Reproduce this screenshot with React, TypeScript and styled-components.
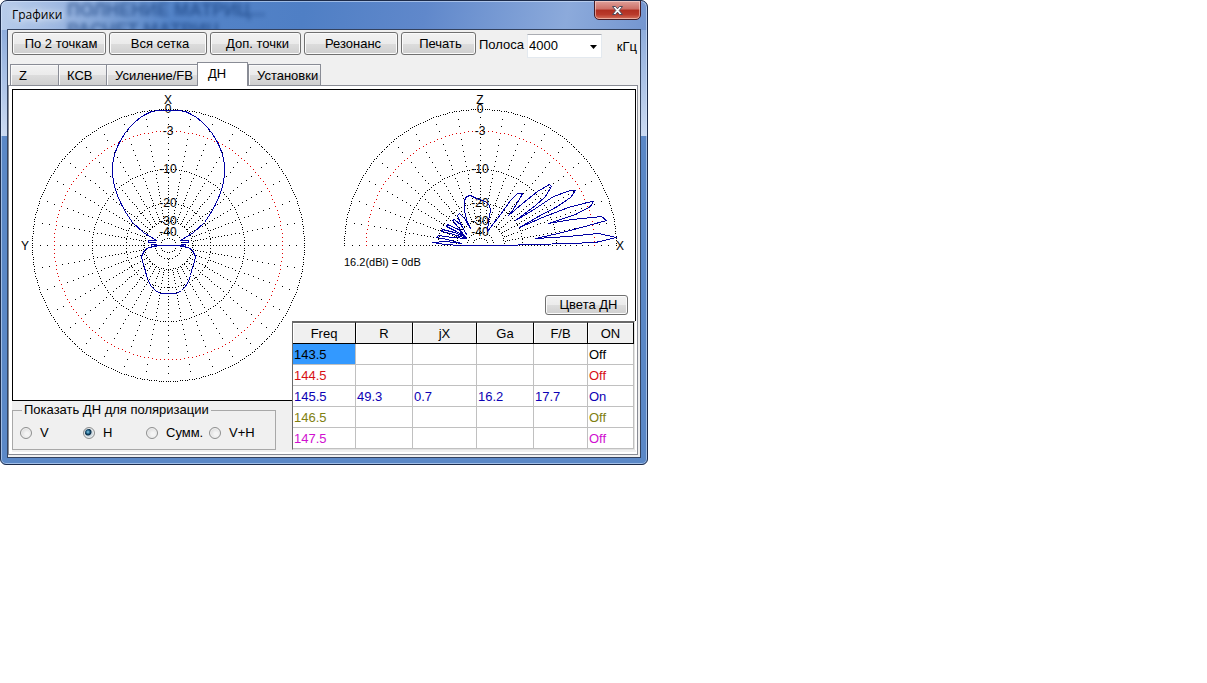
import React, { useState } from "react";
import styled, { createGlobalStyle } from "styled-components";

const GlobalStyle = createGlobalStyle`
  *, *::before, *::after { box-sizing: border-box; }
  body {
    margin: 0;
    background: #ffffff;
    color: #000000;
    font: 13px/16px "Liberation Sans", Arial, sans-serif;
  }
  button, select, input { font: inherit; color: inherit; }
`;

const WindowFrame = styled.main`
  width: 648px;
  max-width: 100%;
  padding: 0 6px 6px;
  border: 1px solid #1c2b4a;
  border-radius: 7px 7px 6px 6px;
  box-shadow: inset 0 0 0 1px rgba(220, 235, 255, 0.55);
  background:
    linear-gradient(100deg, #b9cdeb 0, #a3bce3 50px, #5484c8 170px, #4f7fc5 300px, #6088cb 420px, #8caadb 560px, #7496d0 100%) top / 100% 29px no-repeat,
    linear-gradient(#8faddc, #cbdaf2) 0 29px / 100% 106px no-repeat,
    #5b88c7;
`;

const TitleBar = styled.header`
  position: relative;
  display: flex;
  justify-content: space-between;
  height: 28px;
  overflow: hidden;
`;

const Title = styled.h1`
  position: relative;
  margin: 6px 0 0 5px;
  font: 12px/16px "Open Sans", "Noto Sans", sans-serif;
  text-shadow: 0 0 6px #ffffff, 0 0 8px #dfeaff;
`;

const GlassBackdrop = styled.div`
  position: absolute;
  top: -1px;
  left: 60px;
  color: #123a78;
  opacity: 0.6;
  filter: blur(2px);
  font: bold 18px/20px "Liberation Sans", Arial, sans-serif;
  white-space: pre;
`;

const CloseButton = styled.button`
  display: flex;
  align-items: center;
  justify-content: center;
  width: 47px;
  height: 20px;
  margin: -1px 0 0;
  padding: 0;
  border: 1px solid #451c25;
  border-radius: 0 0 5px 5px;
  box-shadow: inset 0 0 0 1px rgba(255, 225, 220, 0.55);
  background: linear-gradient(#dfa09a, #cd6f66 45%, #b02e20 50%, #b93a2b 75%, #d4705c);
`;

const Client = styled.div`
  border: 1px solid #33425f;
  background: #f0f0f0;
`;

const Toolbar = styled.div`
  display: flex;
  gap: 3px;
  height: 32px;
  padding: 2px 3px 0 4px;
`;

const PushButton = styled.button<{ $width: number; $small?: boolean }>`
  flex: 0 0 auto;
  width: ${(p) => p.$width}px;
  height: ${(p) => (p.$small ? 20 : 23)}px;
  padding: 0 0 0 4px;
  border: 1px solid #707070;
  border-radius: 3px;
  box-shadow: inset 0 0 0 1px #fbfbfb;
  background: linear-gradient(#f2f2f2, #ebebeb 50%, #dddddd 50%, #cfcfcf);
  white-space: nowrap;
`;

const ToolLabel = styled.label`
  padding-top: 5px;
`;

const SelectBox = styled.div`
  position: relative;
  height: 24px;
  margin-top: 2px;
`;

const Select = styled.select`
  appearance: none;
  width: 75px;
  height: 24px;
  padding: 0 20px 0 1px;
  border: 1px solid #e3e9ef;
  border-top-color: #abadb3;
  border-radius: 0;
  background: #ffffff;
`;

const SelectArrow = styled.svg`
  position: absolute;
  top: 11px;
  right: 5px;
  pointer-events: none;
`;

const Unit = styled.span`
  margin-left: auto;
  padding-top: 7px;
`;

const TabList = styled.div`
  display: flex;
  align-items: flex-end;
  height: 24px;
  padding-left: 2px;
`;

const Tab = styled.button<{ $width: number; $active: boolean }>`
  position: relative;
  flex: 0 0 auto;
  width: ${(p) => p.$width}px;
  height: ${(p) => (p.$active ? 24 : 21)}px;
  margin-bottom: ${(p) => (p.$active ? 0 : 1)}px;
  padding: ${(p) => (p.$active ? "0 0 2px 10px" : "2px 0 0 8px")};
  border: 1px solid #898c95;
  border-bottom: 0;
  border-right-width: ${(p) => (p.$active ? 1 : 0)}px;
  box-shadow: ${(p) => (p.$active ? "none" : "inset 1px 1px 0 #fafafa")};
  background: ${(p) =>
    p.$active ? "#ffffff" : "linear-gradient(#f2f2f2, #ebebeb 50%, #dddddd 50%, #cfcfcf)"};
  text-align: left;
  white-space: nowrap;
  z-index: 1;
  &:last-child { border-right-width: 1px; }
`;

const TabPage = styled.section`
  position: relative;
  margin: -1px 2px 2px 0;
  padding: 3px 1px 2px 3px;
  border: 1px solid #898c95;
  background: #ffffff;
`;

const PageBody = styled.div`
  padding-bottom: 2px;
  background: #f0f0f0;
`;

const ChartPanel = styled.div`
  border: 1px solid #000000;
  background: #ffffff;
  svg { display: block; max-width: 100%; }
`;

const GroupBox = styled.fieldset`
  display: flex;
  width: 264px;
  min-width: 0;
  height: 48px;
  margin: 1px 0 0;
  padding: 5px 0 0 7px;
  border: 1px solid #a8a8a8;
  legend { padding: 0 2px; margin-left: 2px; }
`;

const RadioLabel = styled.label`
  display: flex;
  align-items: center;
  flex: 0 0 63px;
  gap: 8px;
  height: 20px;
  white-space: nowrap;
`;

const Radio = styled.input`
  appearance: none;
  flex: 0 0 auto;
  width: 12px;
  height: 12px;
  margin: 0;
  border: 1px solid #8e8f8f;
  border-radius: 50%;
  background: radial-gradient(circle at 60% 60%, #f4f4f4 20%, #d0d0d0);
  box-shadow: inset 0 0 0 1px #f0f0f0;
  &:checked {
    background: radial-gradient(circle at 40% 40%, #8fd3ef 0, #16577c 2px, #0d2c45 3px, #cfdbe2 4px);
  }
`;

const Overlay = styled.div`
  position: absolute;
  right: 2px;
  bottom: 4px;
  display: flex;
  flex-direction: column;
  align-items: flex-end;
  gap: 6px;
`;

const ButtonSlot = styled.div`
  display: flex;
  padding-right: 7px;
`;

const Grid = styled.table`
  width: 343px;
  border-collapse: separate;
  border-spacing: 0;
  table-layout: fixed;
  border: 1px solid #696969;
  border-right-color: #e3e3e3;
  border-bottom-color: #e3e3e3;
  box-shadow: 1px 0 0 #ffffff;
  background: #ffffff;
`;

const HeadCell = styled.th`
  height: 22px;
  padding: 2px 0 0;
  border-right: 1px solid #000000;
  border-bottom: 1px solid #000000;
  border-top: 1px solid #696969;
  box-shadow: inset 1px 1px 0 #ffffff;
  background: #f0f0f0;
  font-weight: normal;
`;

const Cell = styled.td<{ $color: string; $selected?: boolean }>`
  height: 21px;
  padding: 1px 0 0 1px;
  border-right: 1px solid #c0c0c0;
  border-bottom: 1px solid #c0c0c0;
  color: ${(p) => p.$color};
  background: ${(p) => (p.$selected ? "#3399ff" : "#ffffff")};
`;

const PlotText = styled.text<{ $size?: number }>`
  font: ${(p) => p.$size ?? 12}px "Liberation Sans", Arial, sans-serif;
  fill: #000000;
`;

const RADIUS = 136;
const ringRadius = (db: number) => RADIUS * Math.pow(0.89, db / 2);

type Point = [number, number];

const dot = (radius: number, degrees: number) => {
  const a = (degrees * Math.PI) / 180;
  return `M${Math.round(radius * Math.cos(a))} ${-Math.round(radius * Math.sin(a))}h1v1h-1z`;
};

const ring = (db: number, step: number, sweep: number) => {
  let d = "";
  for (let a = 0; a <= sweep; a += step) d += dot(ringRadius(db), a);
  return d;
};

const spokes = (sweep: number) => {
  let d = "";
  for (let a = 0; a <= sweep; a += 10) {
    for (let db = 1; db < 20; db += 1) d += dot(ringRadius(db), a);
    for (let db = 20; db < 30; db += 1.5) d += dot(ringRadius(db), a);
    if (a % 90 === 0) for (let db = 30; db < 40; db += 3) d += dot(ringRadius(db), a);
  }
  return d;
};

const RINGS: Point[] = [[0, 1], [10, 2], [20, 4], [30, 6], [40, 12], [50, 20]];
const LABELS = [0, 3, 10, 20, 30, 40];

function PolarPlot(props: {
  x: number;
  y: number;
  sweep: number;
  topLabel: string;
  sideLabel: string;
  sideX: number;
  curves: Point[][];
}) {
  const black = RINGS.map(([db, step]) => ring(db, step, props.sweep)).join("") + spokes(props.sweep);
  return (
    <g transform={`translate(${props.x} ${props.y})`}>
      <path d={black} fill="#000000" shapeRendering="crispEdges" />
      <path d={ring(3, 2, props.sweep)} fill="#e00000" shapeRendering="crispEdges" />
      {LABELS.map((db) => (
        <PlotText key={db} x={0} y={4 - Math.round(ringRadius(db))} textAnchor="middle">
          {db ? `-${db}` : "0"}
        </PlotText>
      ))}
      <PlotText x={0} y={-141} textAnchor="middle">{props.topLabel}</PlotText>
      <PlotText x={props.sideX} y={5} textAnchor="middle">{props.sideLabel}</PlotText>
      {props.curves.map((curve, i) => (
        <polyline
          key={i}
          points={curve.map((p) => p.join(",")).join(" ")}
          fill="none"
          stroke="#0000a4"
          strokeWidth="1"
          shapeRendering="crispEdges"
          transform="translate(0.5 0.5)"
        />
      ))}
    </g>
  );
}

const HALF_AZIMUTH: Point[] = [
  [0, -135], [10, -135], [17, -134], [23, -131], [28, -128], [33, -124], [38, -119], [43, -113],
  [48, -105], [51, -99], [54, -91], [56, -81], [56, -70], [54, -59], [51, -50], [47, -41],
  [42, -32], [36, -23], [25, -13], [12, -5], [20, -5], [20, -3], [13, -3],
];
const HALF_AZIMUTH_BACK: Point[] = [
  [12, -1], [17, -1], [17, 1], [12, 1], [20, 2], [24, 5], [27, 11], [26, 16], [24, 22],
  [22, 30], [20, 36], [17, 41], [13, 45], [8, 48], [0, 48],
];
const mirror = (points: Point[]) => points.map(([x, y]): Point => [-x, y]);
const AZIMUTH: Point[][] = [
  HALF_AZIMUTH,
  mirror(HALF_AZIMUTH),
  HALF_AZIMUTH_BACK,
  mirror(HALF_AZIMUTH_BACK),
  [[-15, 0], [15, 0]],
];

const ELEVATION: Point[][] = [[
  [-20, 0], [-35, -1], [-48, -3], [-34, -4], [-19, -2], [-33, -6], [-44, -8], [-42, -10],
  [-28, -8], [-14, -7], [-30, -12], [-39, -14], [-38, -16], [-26, -13], [-14, -8], [-26, -15],
  [-34, -19], [-33, -21], [-22, -16], [-15, -8], [-22, -18], [-28, -25], [-26, -26], [-19, -20],
  [-14, -11], [-20, -22], [-23, -30], [-21, -32], [-16, -27], [-10, -17], [-14, -26], [-16, -35],
  [-16, -45], [-14, -49], [-10, -50], [-4, -47], [5, -44], [9, -40], [10, -35], [8, -25], [7, -14],
  [20, -31], [30, -45], [37, -52], [42, -52], [40, -48], [32, -35], [28, -30], [42, -42],
  [57, -54], [69, -61], [71, -59], [65, -49], [55, -40], [35, -25], [52, -35], [73, -49],
  [90, -55], [95, -55], [90, -48], [77, -39], [58, -29], [39, -18], [62, -28], [88, -38],
  [107, -43], [113, -44], [110, -39], [95, -31], [68, -22], [92, -26], [112, -28], [121, -29],
  [126, -25], [108, -20], [82, -13], [55, -7], [88, -9], [118, -12], [136, -8], [115, -3],
  [88, -2], [55, -1], [20, 0], [-20, 0],
]];

const COMMANDS = [
  { label: "По 2 точкам", width: 94 },
  { label: "Вся сетка", width: 98 },
  { label: "Доп. точки", width: 91 },
  { label: "Резонанс", width: 94 },
  { label: "Печать", width: 75 },
];

const TABS = [
  { label: "Z", width: 48 },
  { label: "КСВ", width: 48 },
  { label: "Усиление/FB", width: 91 },
  { label: "ДН", width: 51 },
  { label: "Установки", width: 73 },
];

const COLUMNS = [
  { label: "Freq", width: 63 },
  { label: "R", width: 57 },
  { label: "jX", width: 64 },
  { label: "Ga", width: 57 },
  { label: "F/B", width: 54 },
  { label: "ON", width: 46 },
];

const ROWS = [
  { color: "#000000", cells: ["143.5", "", "", "", "", "Off"] },
  { color: "#d80f14", cells: ["144.5", "", "", "", "", "Off"] },
  { color: "#0c00b4", cells: ["145.5", "49.3", "0.7", "16.2", "17.7", "On"] },
  { color: "#808010", cells: ["146.5", "", "", "", "", "Off"] },
  { color: "#d010d0", cells: ["147.5", "", "", "", "", "Off"] },
];

const POLARIZATIONS = ["V", "H", "Сумм.", "V+H"];

export default function App() {
  const [tab, setTab] = useState("ДН");
  const [polarization, setPolarization] = useState("H");

  return (
    <>
      <GlobalStyle />
      <WindowFrame>
        <TitleBar>
          <GlassBackdrop aria-hidden="true">{"ПОЛНЕНИЕ МАТРИЦ...\nРАСЧЕТ МАТРИЦ"}</GlassBackdrop>
          <Title>Графики</Title>
          <CloseButton aria-label="Закрыть">
            <svg width="13" height="11" viewBox="0 0 13 11">
              <path
                d="M1.5 1.5h3l2 2.3 2-2.3h3l-3.3 4 3.3 4h-3l-2-2.3-2 2.3h-3l3.3-4z"
                fill="#ffffff"
                stroke="#4a4a5c"
              />
            </svg>
          </CloseButton>
        </TitleBar>
        <Client>
          <Toolbar>
            {COMMANDS.map((c) => (
              <PushButton key={c.label} $width={c.width}>{c.label}</PushButton>
            ))}
            <ToolLabel htmlFor="band">Полоса</ToolLabel>
            <SelectBox>
              <Select id="band" defaultValue="4000">
                <option>1000</option>
                <option>2000</option>
                <option>4000</option>
                <option>8000</option>
              </Select>
              <SelectArrow width="7" height="4" viewBox="0 0 7 4">
                <path d="M0 0h7L3.5 4z" />
              </SelectArrow>
            </SelectBox>
            <Unit>кГц</Unit>
          </Toolbar>
          <TabList role="tablist">
            {TABS.map((t) => (
              <Tab
                key={t.label}
                role="tab"
                aria-selected={tab === t.label}
                $active={tab === t.label}
                $width={t.width}
                onClick={() => setTab(t.label)}
              >
                {t.label}
              </Tab>
            ))}
          </TabList>
          <TabPage>
            <PageBody>
              <ChartPanel>
                <svg width="622" height="310" viewBox="0 0 622 310">
                  <PolarPlot x={155} y={155} sweep={359} topLabel="X" sideLabel="Y" sideX={-143} curves={AZIMUTH} />
                  <PolarPlot x={467} y={155} sweep={180} topLabel="Z" sideLabel="X" sideX={140} curves={ELEVATION} />
                  <PlotText x={331} y={176} $size={11}>16.2(dBi) = 0dB</PlotText>
                </svg>
              </ChartPanel>
              <GroupBox>
                <legend>Показать ДН для поляризации</legend>
                {POLARIZATIONS.map((p) => (
                  <RadioLabel key={p}>
                    <Radio
                      type="radio"
                      name="polarization"
                      checked={polarization === p}
                      onChange={() => setPolarization(p)}
                    />
                    {p}
                  </RadioLabel>
                ))}
              </GroupBox>
            </PageBody>
            <Overlay>
              <ButtonSlot>
                <PushButton $width={83} $small>Цвета ДН</PushButton>
              </ButtonSlot>
              <Grid>
                <colgroup>
                  {COLUMNS.map((c) => <col key={c.label} width={c.width} />)}
                </colgroup>
                <thead>
                  <tr>
                    {COLUMNS.map((c) => <HeadCell key={c.label} scope="col">{c.label}</HeadCell>)}
                  </tr>
                </thead>
                <tbody>
                  {ROWS.map((row, r) => (
                    <tr key={row.cells[0]}>
                      {row.cells.map((cell, c) => (
                        <Cell key={c} $color={row.color} $selected={r === 0 && c === 0}>{cell}</Cell>
                      ))}
                    </tr>
                  ))}
                </tbody>
              </Grid>
            </Overlay>
          </TabPage>
        </Client>
      </WindowFrame>
    </>
  );
}
